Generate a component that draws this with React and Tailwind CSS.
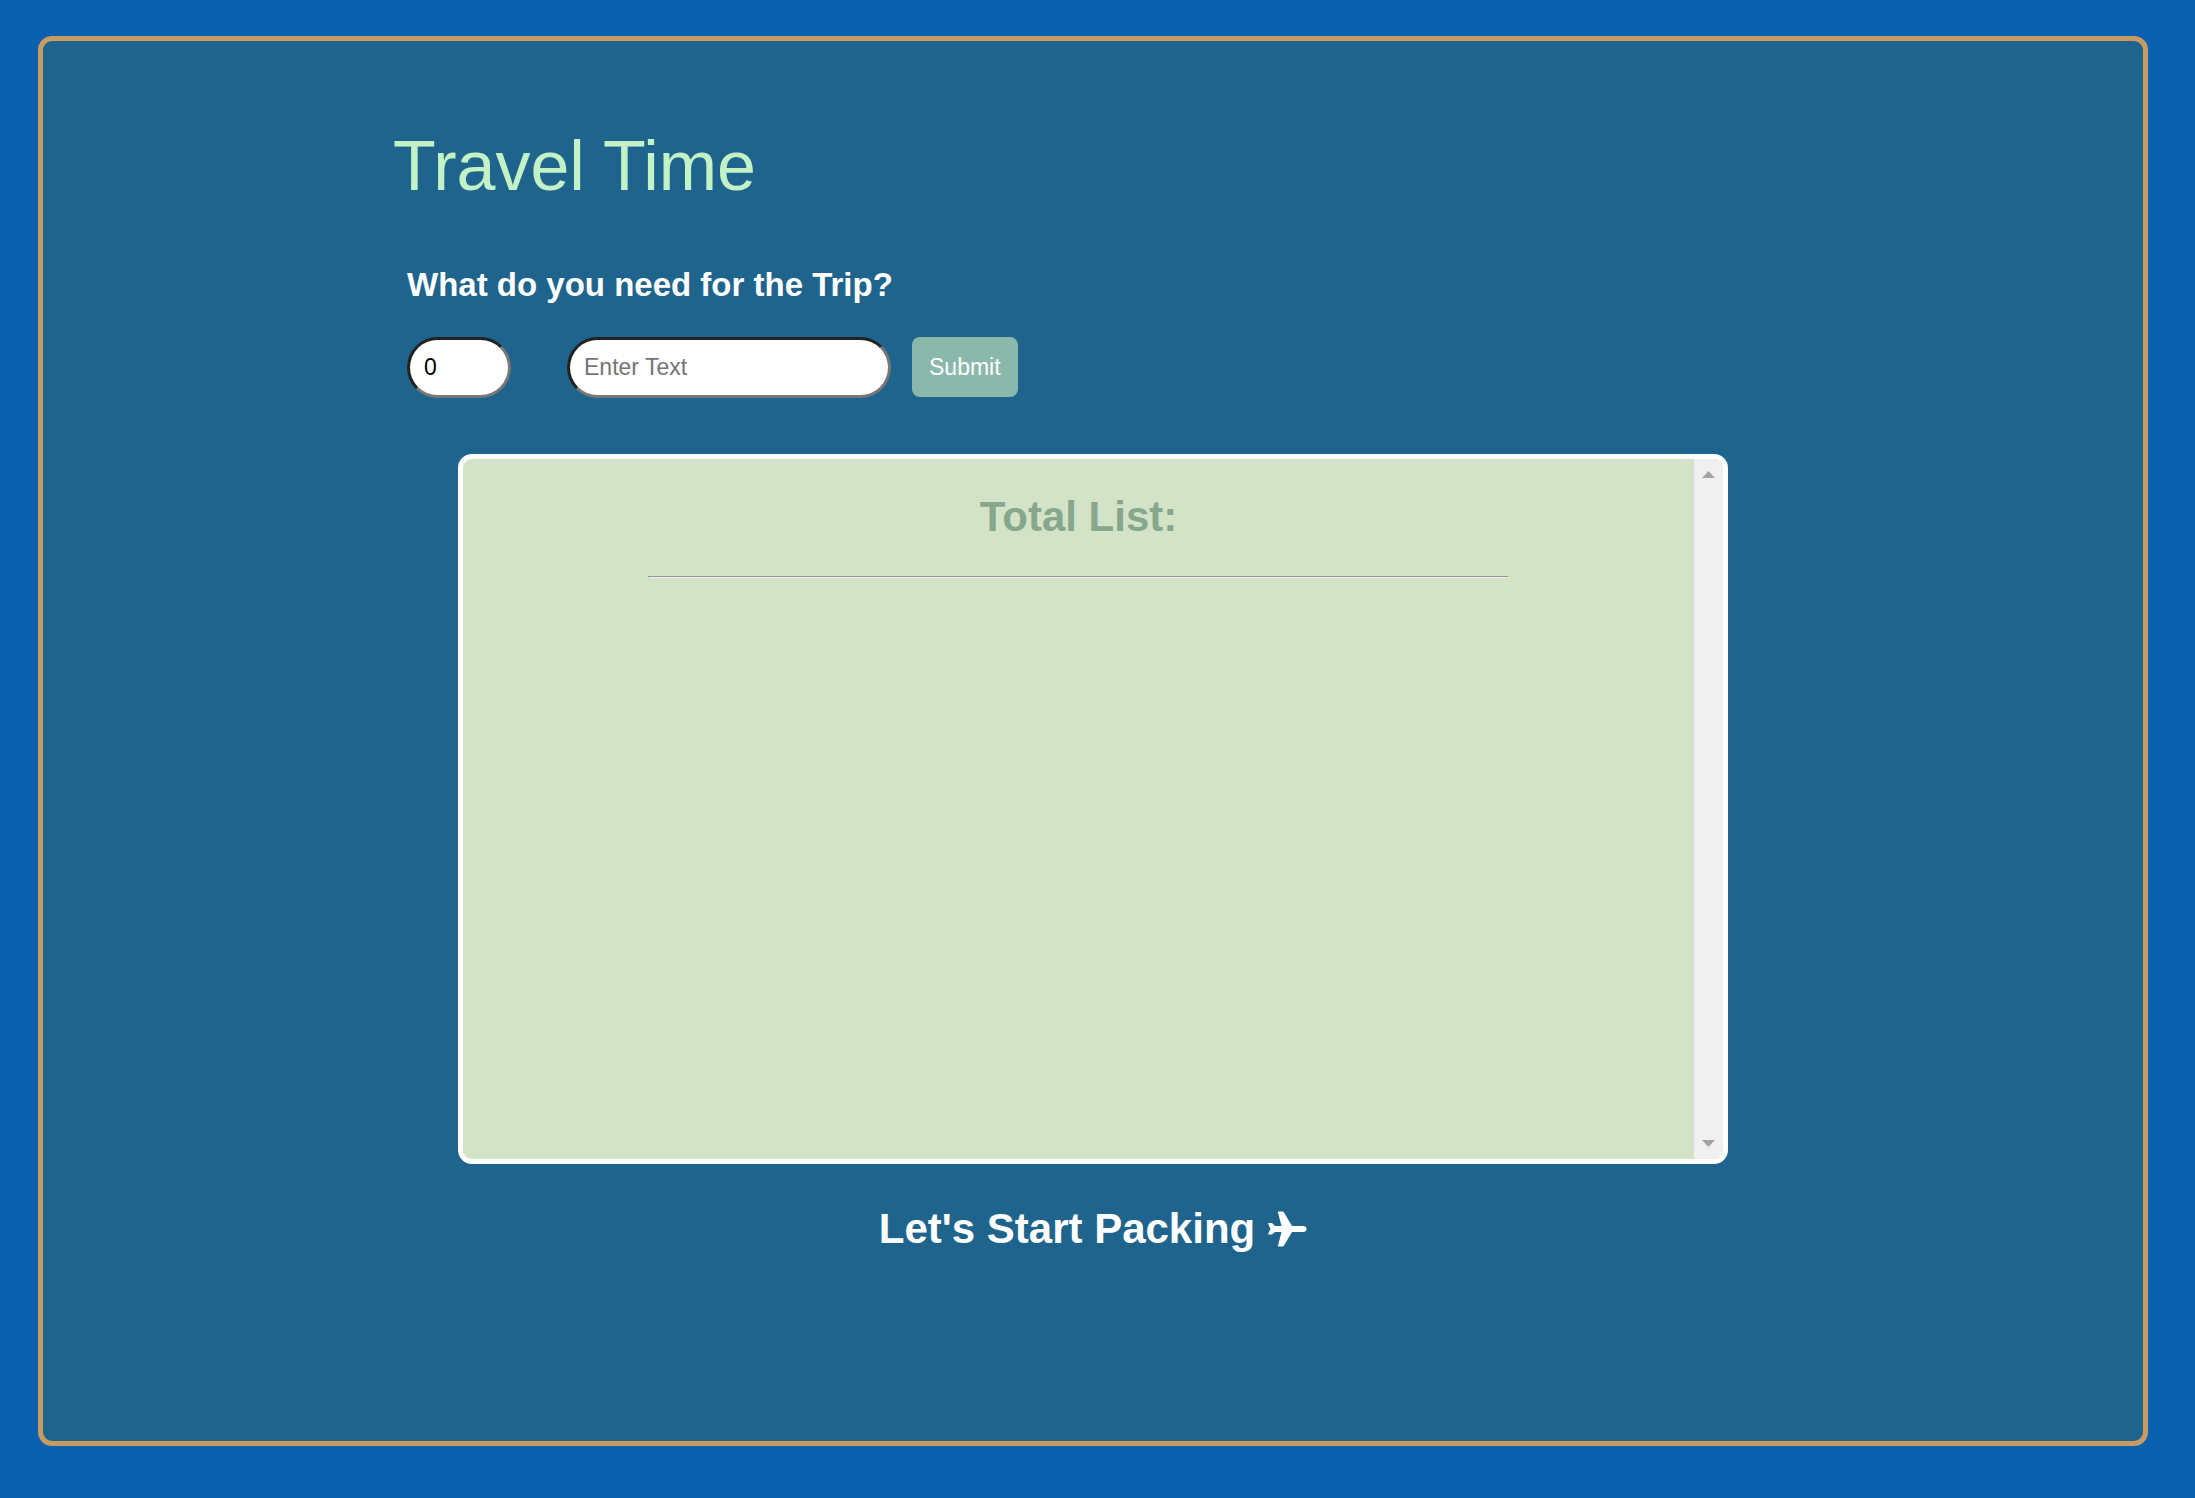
export default function App() {
  return (
    <div className="min-h-screen bg-[#0b60b0] pt-9 pr-[47px] pb-[52px] pl-[38px] font-['Liberation_Sans',Arial,sans-serif]">
      <main className="min-h-[1410px] rounded-[14px] border-[5px] border-[#c89b62] bg-[#1f648c] pt-20">
        <div className="mx-auto w-2/3">
          <h1 className="text-[70px] leading-[90px] text-[#c3f2c7]">Travel Time</h1>
          <form className="px-[14px] pt-[54px]" onSubmit={(e) => e.preventDefault()}>
            <h2 className="text-[33px] leading-10 font-bold text-white">What do you need for the Trip?</h2>
            <div className="mt-8 flex items-start">
              <input
                type="text"
                inputMode="numeric"
                aria-label="Quantity"
                defaultValue="0"
                className="h-[61px] w-[104px] rounded-full border-3 border-t-[#222] border-r-[#777] border-b-[#777] border-l-[#222] bg-white px-[14px] text-[23px] text-black"
              />
              <input
                type="text"
                aria-label="Item"
                placeholder="Enter Text"
                className="ml-14 h-[61px] w-[324px] rounded-full border-3 border-t-[#222] border-r-[#777] border-b-[#777] border-l-[#222] bg-white px-[14px] text-[23px] text-black placeholder:text-[#757575]"
              />
              <button type="submit" className="ml-[21px] h-[60px] rounded-[8px] bg-[#8ab8ab] px-[17px] text-[23px] text-white">
                Submit
              </button>
            </div>
          </form>
        </div>

        <section className="mx-auto mt-14 flex h-[710px] w-[calc(60%+10px)] overflow-hidden rounded-[14px] border-[5px] border-white bg-[#d3e3c8]">
          <div className="flex-1 pt-[33px]">
            <h2 className="text-center text-[42px] leading-[50px] font-bold text-[#86a78b]">Total List:</h2>
            <hr className="mx-auto mt-[34px] h-[2px] w-[70%] border border-t-[#9a929a] border-r-[#eee] border-b-[#eee] border-l-[#9a929a]" />
          </div>
          <div className="flex w-[29px] flex-col items-center justify-between bg-[#f0f0f0] py-3" aria-hidden="true">
            <svg width="13" height="7" viewBox="0 0 13 7" fill="#a3a3a3">
              <path d="M0 7L6.5 0L13 7Z" />
            </svg>
            <svg width="13" height="7" viewBox="0 0 13 7" fill="#a3a3a3">
              <path d="M0 0H13L6.5 7Z" />
            </svg>
          </div>
        </section>

        <h2 className="mt-10 flex items-center justify-center text-[42px] leading-[50px] font-bold text-white">
          Let's Start Packing
          <svg className="ml-3" width="40" height="36" viewBox="0 0 40 36" fill="#fff" aria-hidden="true">
            <path d="M11.500 0.500H15.500Q16.500 0.500 17 1.500L25 15H36.500Q39.500 15.500 39.500 18Q39.500 20.500 36.500 21H25L17 34.500Q16.500 35.500 15.500 35.500H11.500Q10.500 35.500 11 34.500L14.500 21H8L5 23.500H1.500Q1 23.500 1.200 22.800L3.500 18L1 12.500Q1 12 1.500 12H5L8 15H14.500L11 1.500Q10.500 0.500 11.500 0.500Z" />
          </svg>
        </h2>
      </main>
    </div>
  );
}
